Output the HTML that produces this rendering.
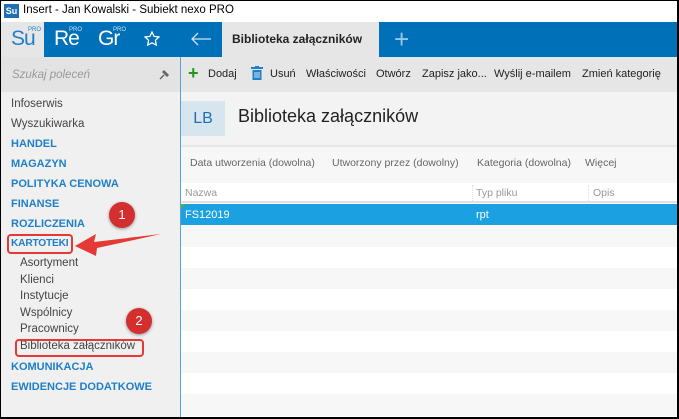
<!DOCTYPE html>
<html><head><meta charset="utf-8"><style>
*{margin:0;padding:0;box-sizing:border-box}
body{width:679px;height:419px;overflow:hidden;background:#fff;font-family:"Liberation Sans",sans-serif;position:relative}
.a{position:absolute;white-space:nowrap}
.frame{position:absolute;left:0;top:0;width:679px;height:419px;border:1px solid #000;border-right-width:2px;border-bottom-width:2px;pointer-events:none}
.nav{font-size:11.5px;color:#444}
.cat{font-size:11px;font-weight:bold;color:#1f7fc8}
.tb{font-size:11px;color:#222;top:68px}
.f{font-size:10.5px;color:#666;top:157px}
</style></head><body>
<div class="a" style="left:0;top:0;width:679px;height:22px;background:#fff"></div>
<div class="a" style="left:4px;top:4px;width:15px;height:14px;background:#1f6fb5;color:#fff;font-size:9px;font-weight:bold;text-align:center;line-height:14px">Su</div>
<div class="a" style="left:23px;top:4px;font-size:11.5px;color:#000">Insert - Jan Kowalski - Subiekt nexo PRO</div>
<div class="a" style="left:0;top:22px;width:44px;height:35px;background:#e6e6e6"></div>
<div class="a" style="left:11px;top:27px;font-size:21px;color:#1f7fc8;letter-spacing:-1px">Su</div>
<div class="a" style="left:28px;top:27px;font-size:6px;color:#1f7fc8">PRO</div>
<div class="a" style="left:44px;top:22px;width:178px;height:35px;background:#0070b8"></div>
<div class="a" style="left:54px;top:27px;font-size:21px;color:#fff;letter-spacing:-1px">Re</div>
<div class="a" style="left:69px;top:27px;font-size:6px;color:#cfe3f3">PRO</div>
<div class="a" style="left:98px;top:27px;font-size:21px;color:#fff;letter-spacing:-1px">Gr</div>
<div class="a" style="left:113px;top:27px;font-size:6px;color:#cfe3f3">PRO</div>
<svg class="a" style="left:143px;top:30px" width="18" height="18" viewBox="0 0 18 18"><path d="M9 2l2.1 4.4 4.8.6-3.5 3.3.9 4.8L9 12.8 4.7 15.1l.9-4.8L2.1 7l4.8-.6z" fill="none" stroke="#fff" stroke-width="1.3"/></svg>
<svg class="a" style="left:190px;top:31px" width="22" height="16" viewBox="0 0 22 16"><path d="M21 8H2M8 2L2 8l6 6" fill="none" stroke="#cfe3f3" stroke-width="1.3"/></svg>
<div class="a" style="left:222px;top:22px;width:157px;height:35px;background:#e6e6e6"></div>
<div class="a" style="left:232px;top:32px;font-size:12px;font-weight:bold;color:#222">Biblioteka załączników</div>
<div class="a" style="left:379px;top:22px;width:298px;height:35px;background:#0070b8"></div>
<div class="a" style="left:394px;top:24px;font-size:26px;color:#9cc6e6;font-weight:300">+</div>
<div class="a" style="left:0;top:57px;width:180px;height:35px;background:#e3e3e3"></div>
<div class="a" style="left:12px;top:69px;font-size:11.5px;font-style:italic;color:#999">Szukaj poleceń</div>
<svg class="a" style="left:159px;top:69px" width="11" height="11" viewBox="0 0 11 11"><path d="M1 10l4-4M4 3l4 4M5 2l4 4-1 1-4-4z" stroke="#666" stroke-width="1.5" fill="#666"/></svg>
<div class="a" style="left:0;top:92px;width:180px;height:325px;background:#f0f0f0"></div>
<div class="a" style="left:180px;top:57px;width:1px;height:360px;background:#5aa0d6"></div>
<div class="a" style="left:181px;top:57px;width:496px;height:35px;background:#e6e6e6"></div>
<div class="a" style="left:188px;top:63px;font-size:18px;font-weight:bold;color:#1a9a1a">+</div>
<svg class="a" style="left:251px;top:66px" width="12" height="14" viewBox="0 0 12 14"><rect x="0" y="1" width="12" height="2" fill="#1f7fc8"/><rect x="4" y="0" width="4" height="2" fill="#1f7fc8"/><rect x="1.5" y="4" width="9" height="10" fill="#1f7fc8"/><path d="M4 6v6M6 6v6M8 6v6" stroke="#fff" stroke-width=".8"/></svg>
<div class="a tb" style="left:208px">Dodaj</div>
<div class="a tb" style="left:270px">Usuń</div>
<div class="a tb" style="left:306px">Właściwości</div>
<div class="a tb" style="left:376px">Otwórz</div>
<div class="a tb" style="left:422px">Zapisz jako...</div>
<div class="a tb" style="left:494px">Wyślij e-mailem</div>
<div class="a tb" style="left:582px">Zmień kategorię</div>
<div class="a" style="left:181px;top:92px;width:496px;height:53px;background:#f3f3f3"></div>
<div class="a" style="left:181px;top:101px;width:44px;height:35px;background:#d7e5ef;color:#1f6fb5;font-size:16px;text-align:center;line-height:35px">LB</div>
<div class="a" style="left:238px;top:106px;font-size:18px;color:#222">Biblioteka załączników</div>
<div class="a" style="left:181px;top:145px;width:496px;height:2px;background:#e6e6e6"></div>
<div class="a" style="left:181px;top:147px;width:496px;height:36px;background:#f7f7f7"></div>
<div class="a f" style="left:190px">Data utworzenia (dowolna)</div>
<div class="a f" style="left:332px">Utworzony przez (dowolny)</div>
<div class="a f" style="left:477px">Kategoria (dowolna)</div>
<div class="a f" style="left:585px">Więcej</div>
<div class="a" style="left:181px;top:183px;width:496px;height:20px;background:#fff;border-bottom:2px solid #e0e0e0"></div>
<div class="a" style="left:472px;top:185px;height:16px;border-left:1px dotted #ddd"></div>
<div class="a" style="left:588px;top:185px;height:16px;border-left:1px dotted #ddd"></div>
<div class="a" style="left:185px;top:187px;font-size:10.5px;color:#999">Nazwa</div>
<div class="a" style="left:476px;top:187px;font-size:10.5px;color:#999">Typ pliku</div>
<div class="a" style="left:593px;top:187px;font-size:10.5px;color:#999">Opis</div>
<div class="a" style="left:181px;top:204px;width:496px;height:21px;background:#1ba1e2"></div>
<svg class="a" style="left:181px;top:204px" width="5" height="5"><path d="M0 0h5L0 5z" fill="#4caf50"/></svg>
<div class="a" style="left:185px;top:209px;font-size:11px;color:#fff">FS12019</div>
<div class="a" style="left:476px;top:209px;font-size:11px;color:#fff">rpt</div>
<div class="a" style="left:181px;top:226px;width:496px;height:21px;background:#f7f7f7"></div>
<div class="a" style="left:181px;top:268px;width:496px;height:21px;background:#f7f7f7"></div>
<div class="a" style="left:181px;top:310px;width:496px;height:21px;background:#f7f7f7"></div>
<div class="a" style="left:181px;top:352px;width:496px;height:21px;background:#f7f7f7"></div>
<div class="a" style="left:181px;top:394px;width:496px;height:22px;background:#f7f7f7"></div>
<div class="a nav" style="left:11px;top:98px">Infoserwis</div>
<div class="a nav" style="left:11px;top:118px">Wyszukiwarka</div>
<div class="a cat" style="left:11px;top:138px">HANDEL</div>
<div class="a cat" style="left:11px;top:158px">MAGAZYN</div>
<div class="a cat" style="left:11px;top:178px">POLITYKA CENOWA</div>
<div class="a cat" style="left:11px;top:198px">FINANSE</div>
<div class="a cat" style="left:11px;top:218px">ROZLICZENIA</div>
<div class="a cat" style="left:11px;top:238px;font-size:10.2px;letter-spacing:-0.2px">KARTOTEKI</div>
<div class="a nav" style="left:20px;top:257px">Asortyment</div>
<div class="a nav" style="left:20px;top:274px">Klienci</div>
<div class="a nav" style="left:20px;top:290px">Instytucje</div>
<div class="a nav" style="left:20px;top:307px">Wspólnicy</div>
<div class="a nav" style="left:20px;top:323px">Pracownicy</div>
<div class="a nav" style="left:20px;top:340px">Biblioteka załączników</div>
<div class="a cat" style="left:11px;top:361px">KOMUNIKACJA</div>
<div class="a cat" style="left:11px;top:381px">EWIDENCJE DODATKOWE</div>
<div class="a" style="left:7px;top:234px;width:66px;height:20px;border:2px solid #e53935;border-radius:4px"></div>
<div class="a" style="left:15px;top:339px;width:129px;height:18px;border:2px solid #e53935;border-radius:4px"></div>
<svg class="a" style="left:74px;top:226px" width="90" height="30"><path d="M1 20L22 8l-2 8 67-8-64 14-1 8z" fill="#e53935"/></svg>
<div class="a" style="left:109px;top:202px;width:26px;height:26px;border-radius:50%;background:#d32f2f;color:#fff;font-size:13px;text-align:center;line-height:26px;box-shadow:0 1px 3px rgba(0,0,0,.4)">1</div>
<div class="a" style="left:126px;top:308px;width:26px;height:26px;border-radius:50%;background:#d32f2f;color:#fff;font-size:13px;text-align:center;line-height:26px;box-shadow:0 1px 3px rgba(0,0,0,.4)">2</div>
<div class="frame"></div>
</body></html>
